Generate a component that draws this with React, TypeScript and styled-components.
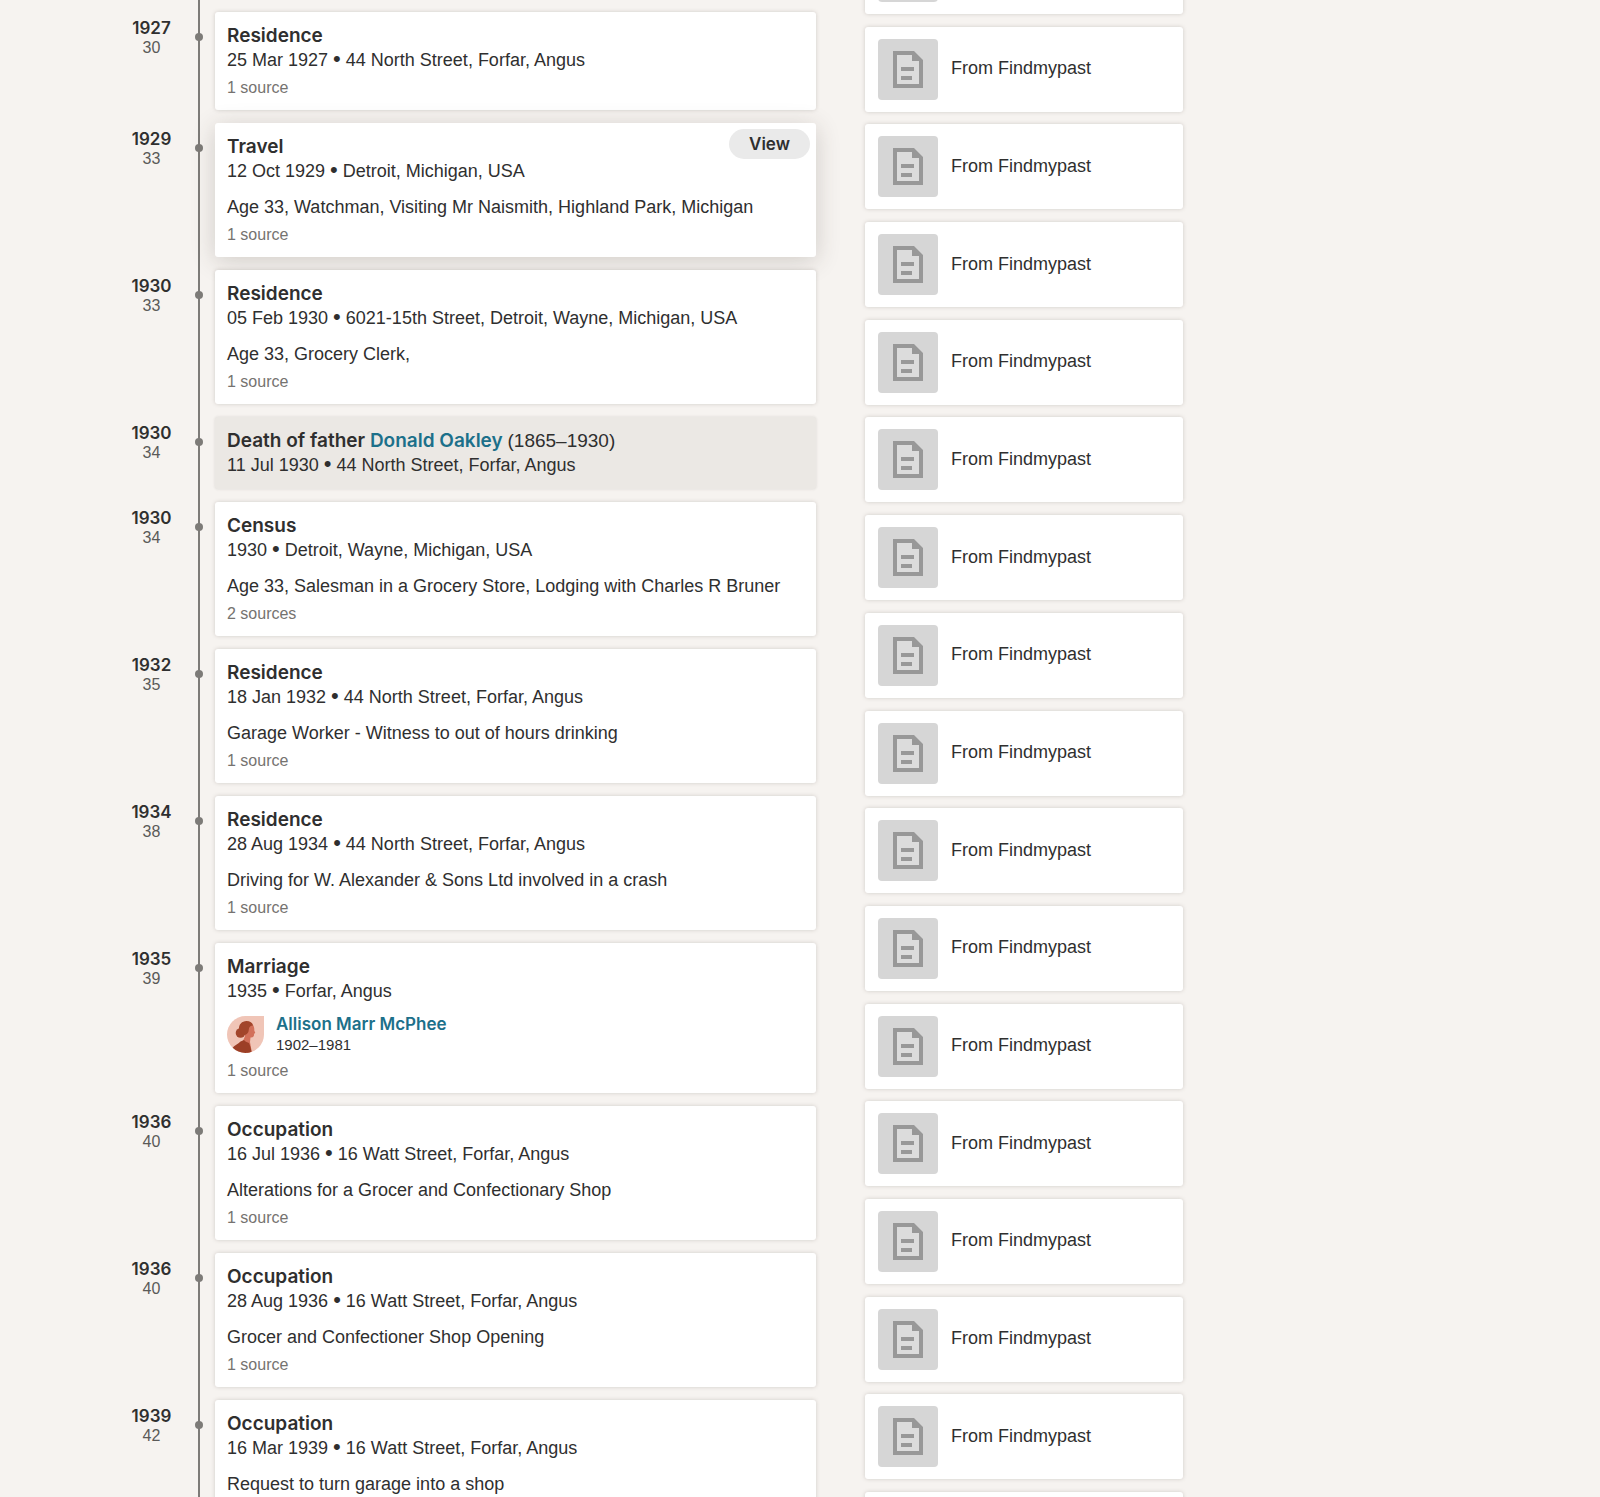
import React from "react";
import styled, { createGlobalStyle, css } from "styled-components";

const GlobalStyle = createGlobalStyle`
  * { box-sizing: border-box; }
  body {
    margin: 0;
    background: #f6f3f0;
    color: #2f2f2f;
    font-family: "Liberation Sans", Arial, sans-serif;
    font-size: 18px;
    line-height: 24px;
  }
`;

const Page = styled.main`
  height: 100vh;
  overflow: hidden;
  padding-left: 120px;
`;

const Columns = styled.div`
  display: grid;
  grid-template-columns: minmax(0, 1fr) 318px;
  column-gap: 49px;
  max-width: 1063px;
  height: 100%;
`;

const Timeline = styled.ol`
  display: flex;
  flex-direction: column;
  height: calc(100vh + 20px);
  margin: 0;
  padding: 0;
  list-style: none;
`;

const Entry = styled.li<{ $grow?: boolean }>`
  display: grid;
  grid-template-columns: 63px 32px minmax(0, 1fr);
  flex: ${(p) => (p.$grow ? "1 0 auto" : "none")};
`;

const When = styled.div`
  display: flex;
  flex-direction: column;
  align-items: center;
  grid-column: 1;
  padding-top: 6px;
  line-height: 20px;
`;

const Year = styled.strong`
  font-family: Inter, sans-serif;
  font-weight: 600;
  font-size: 17px;
`;

const Age = styled.span`
  font-size: 16px;
  color: #5a5a58;
`;

const Rail = styled.div<{ $dot?: boolean }>`
  display: grid;
  grid-column: 2;
  justify-items: center;

  &::before {
    content: "";
    grid-area: 1 / 1;
    width: 2px;
    background: #7d7b78;
  }
  ${(p) =>
    p.$dot &&
    css`
      &::after {
        content: "";
        grid-area: 1 / 1;
        width: 8px;
        height: 8px;
        margin-top: 21px;
        border-radius: 50%;
        background: #7d7b78;
      }
    `}
`;

const surface = css`
  background: #fff;
  border-radius: 3px;
  box-shadow: 0 0 4px rgba(60, 50, 40, 0.2);
`;

const Card = styled.article<{ $tone?: "muted" | "raised" }>`
  ${surface}
  position: relative;
  margin-bottom: 13px;
  padding: 12px;
  ${(p) =>
    p.$tone === "muted" &&
    css`
      background: #ebe8e4;
      box-shadow: 0 0 3px rgba(60, 50, 40, 0.14);
    `}
  ${(p) =>
    p.$tone === "raised" &&
    css`
      box-shadow: 0 4px 24px rgba(60, 50, 40, 0.2);
    `}
`;

const CardEdge = styled.div`
  ${surface}
  grid-column: 3;
  margin-bottom: 12px;
`;

const Title = styled.h3`
  margin: 0;
  font-family: Inter, sans-serif;
  font-size: 19px;
  font-weight: 600;
  line-height: 24px;
`;

const Lifespan = styled.span`
  font-family: "Liberation Sans", Arial, sans-serif;
  font-weight: 400;
`;

const PersonLink = styled.a`
  color: #1c708a;
  text-decoration: none;
`;

const Line = styled.p`
  margin: 0;
`;

const Bullet = styled.span`
  font-size: 22px;
  line-height: 16px;
`;

const Note = styled.p`
  margin: 12px 0 0;
`;

const Sources = styled.p`
  margin: 6px 0 0;
  font-size: 16px;
  line-height: 20px;
  color: #757370;
`;

const ViewButton = styled.button`
  position: absolute;
  top: 6px;
  right: 6px;
  width: 81px;
  height: 30px;
  padding: 0;
  border: 0;
  border-radius: 15px;
  background: #eaeaea;
  color: #2f2f2f;
  font-family: Inter, sans-serif;
  font-size: 17px;
  font-weight: 600;
  line-height: 24px;
  cursor: pointer;
`;

const Spouse = styled.div`
  display: grid;
  grid-template-columns: 37px minmax(0, 1fr);
  align-items: center;
  column-gap: 12px;
  margin-top: 10px;
`;

const SpouseName = styled(PersonLink)`
  display: block;
  font-family: Inter, sans-serif;
  font-size: 17px;
  font-weight: 600;
  line-height: 22px;
`;

const SpouseYears = styled.span`
  display: block;
  font-size: 15px;
  line-height: 20px;
`;

const SourceList = styled.ul`
  display: flex;
  flex-direction: column;
  justify-content: space-between;
  height: calc(100vh + 151px);
  margin: -71px 0 0;
  padding: 0;
  list-style: none;
`;

const SourceCard = styled.li`
  ${surface}
  display: flex;
  flex: none;
  align-items: center;
  gap: 13px;
  padding: 12px 13px;
`;

const Thumb = styled.span`
  display: grid;
  place-items: center;
  width: 60px;
  height: 61px;
  border-radius: 4px;
  background: #d6d6d6;
`;

const SourceName = styled.span`
  padding-bottom: 2px;
`;

type Event = {
  year: string;
  age: string;
  title: string;
  person?: string;
  lifespan?: string;
  date: string;
  place: string;
  note?: string;
  spouse?: { name: string; years: string };
  sources?: string;
  tone?: "muted" | "raised";
};

const events: Event[] = [
  { year: "1927", age: "30", title: "Residence", date: "25 Mar 1927", place: "44 North Street, Forfar, Angus", sources: "1 source" },
  { year: "1929", age: "33", title: "Travel", date: "12 Oct 1929", place: "Detroit, Michigan, USA", note: "Age 33, Watchman, Visiting Mr Naismith, Highland Park, Michigan", sources: "1 source", tone: "raised" },
  { year: "1930", age: "33", title: "Residence", date: "05 Feb 1930", place: "6021-15th Street, Detroit, Wayne, Michigan, USA", note: "Age 33, Grocery Clerk,", sources: "1 source" },
  { year: "1930", age: "34", title: "Death of father", person: "Donald Oakley", lifespan: "(1865–1930)", date: "11 Jul 1930", place: "44 North Street, Forfar, Angus", tone: "muted" },
  { year: "1930", age: "34", title: "Census", date: "1930", place: "Detroit, Wayne, Michigan, USA", note: "Age 33, Salesman in a Grocery Store, Lodging with Charles R Bruner", sources: "2 sources" },
  { year: "1932", age: "35", title: "Residence", date: "18 Jan 1932", place: "44 North Street, Forfar, Angus", note: "Garage Worker - Witness to out of hours drinking", sources: "1 source" },
  { year: "1934", age: "38", title: "Residence", date: "28 Aug 1934", place: "44 North Street, Forfar, Angus", note: "Driving for W. Alexander & Sons Ltd involved in a crash", sources: "1 source" },
  { year: "1935", age: "39", title: "Marriage", date: "1935", place: "Forfar, Angus", spouse: { name: "Allison Marr McPhee", years: "1902–1981" }, sources: "1 source" },
  { year: "1936", age: "40", title: "Occupation", date: "16 Jul 1936", place: "16 Watt Street, Forfar, Angus", note: "Alterations for a Grocer and Confectionary Shop", sources: "1 source" },
  { year: "1936", age: "40", title: "Occupation", date: "28 Aug 1936", place: "16 Watt Street, Forfar, Angus", note: "Grocer and Confectioner Shop Opening", sources: "1 source" },
  { year: "1939", age: "42", title: "Occupation", date: "16 Mar 1939", place: "16 Watt Street, Forfar, Angus", note: "Request to turn garage into a shop" },
];

const sourceCards = Array.from({ length: 17 }, (_, i) => (i === 0 || i === 16 ? "" : "From Findmypast"));

const DocumentIcon = () => (
  <svg width="30" height="37" viewBox="0 0 30 37" aria-hidden="true">
    <path fill="#dcdcdc" d="M2 2h18l8 8v25H2z" />
    <path
      fill="#989898"
      fillRule="evenodd"
      d="M0 0h21l9 9v28H0zM4 4v29h22V10h-7V4z"
    />
    <path fill="#989898" d="M8 16h13v4H8zM8 25h11v4H8z" />
  </svg>
);

const Portrait = () => (
  <svg width="37" height="37" viewBox="0 0 37 37" aria-hidden="true">
    <defs>
      <clipPath id="drop">
        <path d="M18.500 0H37v18.500A18.500 18.500 0 1 1 18.500 0z" />
      </clipPath>
    </defs>
    <g clipPath="url(#drop)">
      <path fill="#f0c5b7" d="M0 0h37v37H0z" />
      <path
        fill="#d2705a"
        d="M18 8h7c2 1.500 2.500 4 2.300 6.500l1 2.500-1.200.7c.2 2.600-.8 4-3.600 3.800L23 26l2 11h-5l-4-12 2-5z"
      />
      <circle cx="13.500" cy="17" r="4.800" fill="#a2452b" />
      <path
        fill="#a2452b"
        d="M12 13.500C11.500 8.500 15 5 19.500 5c3.500 0 6 1.500 6.500 4.500-2.500 0-4 1.500-4.200 4 0 2.500-1 4.500-3.800 5.500l-3-1z"
      />
      <path fill="#9c3f26" d="M5 32.500c2.500-3.500 6-4 8.500-7l3.500-1.500c1.500 2 3.500 2.500 5 3 1.300 2.800 2.300 6.500 2.500 10H8z" />
    </g>
  </svg>
);

const TimelineEntry = ({ event, grow }: { event: Event; grow: boolean }) => (
  <Entry $grow={grow}>
    <When>
      <Year>{event.year}</Year>
      <Age>{event.age}</Age>
    </When>
    <Rail $dot />
    <Card $tone={event.tone}>
      <Title>
        {event.title}
        {event.person && (
          <>
            {" "}
            <PersonLink href="#father">{event.person}</PersonLink> <Lifespan>{event.lifespan}</Lifespan>
          </>
        )}
      </Title>
      <Line>
        {event.date} <Bullet>•</Bullet> {event.place}
      </Line>
      {event.note && <Note>{event.note}</Note>}
      {event.spouse && (
        <Spouse>
          <Portrait />
          <div>
            <SpouseName href="#spouse">{event.spouse.name}</SpouseName>
            <SpouseYears>{event.spouse.years}</SpouseYears>
          </div>
        </Spouse>
      )}
      {event.sources && <Sources>{event.sources}</Sources>}
      {event.tone === "raised" && <ViewButton type="button">View</ViewButton>}
    </Card>
  </Entry>
);

export default function App() {
  return (
    <>
      <GlobalStyle />
      <Page>
        <Columns>
          <Timeline>
            <Entry>
              <Rail />
              <CardEdge />
            </Entry>
            {events.map((event, i) => (
              <TimelineEntry key={i} event={event} grow={i === events.length - 1} />
            ))}
          </Timeline>
          <SourceList>
            {sourceCards.map((name, i) => (
              <SourceCard key={i}>
                <Thumb>
                  <DocumentIcon />
                </Thumb>
                {name && <SourceName>{name}</SourceName>}
              </SourceCard>
            ))}
          </SourceList>
        </Columns>
      </Page>
    </>
  );
}
